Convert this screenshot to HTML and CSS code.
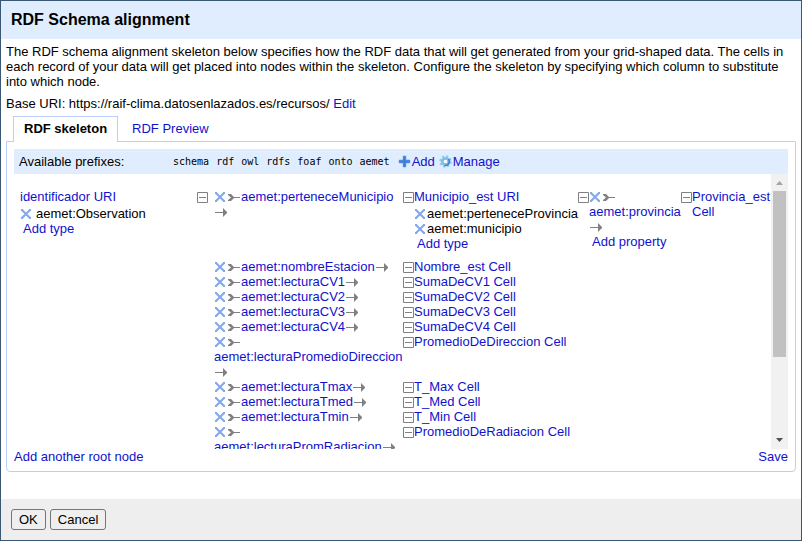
FILE: index.html
```
<!DOCTYPE html>
<html lang="en">
<head>
<meta charset="utf-8">
<title>RDF Schema alignment</title>
<link rel="stylesheet" href="styles.css">
</head>
<body>
<svg class="sprites" aria-hidden="true">
  <symbol id="remove" viewBox="0 0 13 12"><path d="M2 2L10 10M10 2L2 10" fill="none" stroke="#84a9ee" stroke-width="2.200"/><path d="M1 1h2v2H1zM9 1h2v2H9zM1 9h2v2H1zM9 9h2v2H9z" fill="#84a9ee"/></symbol>
  <symbol id="tail" viewBox="0 0 14 12"><path d="M1 3h3l3 3h6v1H7l-3 3H1V9l3-2.500L1 4z" fill="#808080"/></symbol>
  <symbol id="arrow" viewBox="0 0 13 12"><path d="M1 6h8V2l4.500 4.500L9 11V7H1z" fill="#808080"/></symbol>
  <symbol id="toggle" viewBox="0 0 11 11"><path d="M.5.5h10v10H.5zM2 5.500h7" fill="none" stroke="#808080"/></symbol>
</svg>
<div class="dialog">
  <h1 class="title">RDF Schema alignment</h1>
  <main class="body">
    <p class="intro">The RDF schema alignment skeleton below specifies how the RDF data that will get generated from your grid-shaped data. The cells in each record of your data will get placed into nodes within the skeleton. Configure the skeleton by specifying which column to substitute into which node.</p>
    <p class="base">Base URI: https://raif-clima.datosenlazados.es/recursos/ <a href="#">Edit</a></p>
    <nav class="tabs">
      <a class="tab active" href="#">RDF skeleton</a>
      <a class="tab" href="#">RDF Preview</a>
    </nav>
    <section class="panel">
      <div class="prefixes">
        <span class="prefix-label">Available prefixes:</span>
        <span class="prefix-list"><span>schema</span><span>rdf</span><span>owl</span><span>rdfs</span><span>foaf</span><span>onto</span><span>aemet</span></span>
        <a class="action" href="#"><svg width="13" height="13" viewBox="0 0 13 13"><path d="M5.500 1.500h2v4h4v2h-4v4h-2v-4h-4v-2h4z" fill="#2f73d0" stroke="#4d8ade" stroke-width="1.400" stroke-linejoin="round"/></svg>Add</a>
        <a class="action" href="#"><svg width="13" height="13" viewBox="0 0 13 13"><circle cx="6.500" cy="6.500" r="5.200" fill="none" stroke="#8fc4ea" stroke-width="2" stroke-dasharray="2.100 1.984"/><circle cx="6.500" cy="6.500" r="3.200" fill="#fff" stroke="#7dbfe8" stroke-width="2.800"/><path d="M9.500 4A4 4 0 0 1 5.500 10.400" fill="none" stroke="#3585c8" stroke-width="1.500"/></svg>Manage</a>
      </div>
      <div class="viewport">
        <div class="tree">
          <div class="root">
            <a href="#">identificador URI</a>
            <ul class="types spaced">
              <li><svg class="remove"><use href="#remove"/></svg>aemet:Observation</li>
              <li><a class="add" href="#">Add type</a></li>
            </ul>
          </div>
          <svg class="toggle"><use href="#toggle"/></svg>
          <div class="links">
            <div class="link first">
              <div class="property"><svg class="remove"><use href="#remove"/></svg><svg class="tail"><use href="#tail"/></svg><a href="#">aemet:perteneceMunicipio</a><svg class="arrow"><use href="#arrow"/></svg></div>
              <svg class="toggle"><use href="#toggle"/></svg>
              <div class="node">
                <a href="#">Municipio_est URI</a>
                <ul class="types">
                  <li><svg class="remove"><use href="#remove"/></svg>aemet:perteneceProvincia</li>
                  <li><svg class="remove"><use href="#remove"/></svg>aemet:municipio</li>
                  <li><a class="add" href="#">Add type</a></li>
                </ul>
              </div>
              <svg class="toggle"><use href="#toggle"/></svg>
              <div class="property"><svg class="remove"><use href="#remove"/></svg><svg class="tail"><use href="#tail"/></svg><a href="#">aemet:provincia</a> <svg class="arrow"><use href="#arrow"/></svg><br><a class="add" href="#">Add property</a></div>
              <svg class="toggle"><use href="#toggle"/></svg>
              <div class="node"><a href="#">Provincia_est Cell</a></div>
            </div>
            <div class="link"><div class="property"><svg class="remove"><use href="#remove"/></svg><svg class="tail"><use href="#tail"/></svg><a href="#">aemet:nombreEstacion</a><svg class="arrow"><use href="#arrow"/></svg></div><svg class="toggle"><use href="#toggle"/></svg><a href="#">Nombre_est Cell</a></div>
            <div class="link"><div class="property"><svg class="remove"><use href="#remove"/></svg><svg class="tail"><use href="#tail"/></svg><a href="#">aemet:lecturaCV1</a><svg class="arrow"><use href="#arrow"/></svg></div><svg class="toggle"><use href="#toggle"/></svg><a href="#">SumaDeCV1 Cell</a></div>
            <div class="link"><div class="property"><svg class="remove"><use href="#remove"/></svg><svg class="tail"><use href="#tail"/></svg><a href="#">aemet:lecturaCV2</a><svg class="arrow"><use href="#arrow"/></svg></div><svg class="toggle"><use href="#toggle"/></svg><a href="#">SumaDeCV2 Cell</a></div>
            <div class="link"><div class="property"><svg class="remove"><use href="#remove"/></svg><svg class="tail"><use href="#tail"/></svg><a href="#">aemet:lecturaCV3</a><svg class="arrow"><use href="#arrow"/></svg></div><svg class="toggle"><use href="#toggle"/></svg><a href="#">SumaDeCV3 Cell</a></div>
            <div class="link"><div class="property"><svg class="remove"><use href="#remove"/></svg><svg class="tail"><use href="#tail"/></svg><a href="#">aemet:lecturaCV4</a><svg class="arrow"><use href="#arrow"/></svg></div><svg class="toggle"><use href="#toggle"/></svg><a href="#">SumaDeCV4 Cell</a></div>
            <div class="link"><div class="property"><svg class="remove"><use href="#remove"/></svg><svg class="tail"><use href="#tail"/></svg><a href="#">aemet:lecturaPromedioDireccion</a><svg class="arrow"><use href="#arrow"/></svg></div><svg class="toggle"><use href="#toggle"/></svg><a href="#">PromedioDeDireccion Cell</a></div>
            <div class="link"><div class="property"><svg class="remove"><use href="#remove"/></svg><svg class="tail"><use href="#tail"/></svg><a href="#">aemet:lecturaTmax</a><svg class="arrow"><use href="#arrow"/></svg></div><svg class="toggle"><use href="#toggle"/></svg><a href="#">T_Max Cell</a></div>
            <div class="link"><div class="property"><svg class="remove"><use href="#remove"/></svg><svg class="tail"><use href="#tail"/></svg><a href="#">aemet:lecturaTmed</a><svg class="arrow"><use href="#arrow"/></svg></div><svg class="toggle"><use href="#toggle"/></svg><a href="#">T_Med Cell</a></div>
            <div class="link"><div class="property"><svg class="remove"><use href="#remove"/></svg><svg class="tail"><use href="#tail"/></svg><a href="#">aemet:lecturaTmin</a><svg class="arrow"><use href="#arrow"/></svg></div><svg class="toggle"><use href="#toggle"/></svg><a href="#">T_Min Cell</a></div>
            <div class="link"><div class="property"><svg class="remove"><use href="#remove"/></svg><svg class="tail"><use href="#tail"/></svg><a href="#">aemet:lecturaPromRadiacion</a><svg class="arrow"><use href="#arrow"/></svg></div><svg class="toggle"><use href="#toggle"/></svg><a href="#">PromedioDeRadiacion Cell</a></div>
          </div>
        </div>
        <div class="scrollbar">
          <svg width="17" height="17" viewBox="0 0 17 17"><path d="M5 11l3.500-4 3.500 4z" fill="#a3a3a3"/></svg>
          <div class="thumb"></div>
          <svg width="17" height="17" viewBox="0 0 17 17"><path d="M5 6h7l-3.500 4z" fill="#505050"/></svg>
        </div>
      </div>
      <div class="panel-actions"><a href="#">Add another root node</a><a href="#">Save</a></div>
    </section>
  </main>
  <footer class="footer">
    <button type="button">OK</button>
    <button type="button">Cancel</button>
  </footer>
</div>
</body>
</html>
```
FILE: styles.css
```
* { box-sizing: border-box; }
body {
  margin: 0;
  font: 13px/15px "Liberation Sans", Arial, sans-serif;
  color: #000;
  background: #fff;
}
a { color: #11c; text-decoration: none; }
p, h1, ul { margin: 0; padding: 0; }
ul { list-style: none; }
.sprites { position: absolute; width: 0; height: 0; }
.dialog {
  display: flex;
  flex-direction: column;
  min-height: 100vh;
  border: 1px solid #3a5774;
}
.title {
  padding: 9px 10px;
  background: #e0edfe;
  font-size: 16px;
  line-height: 20px;
}
.body { flex: 1; padding: 5px 5px 0; }
.base { margin-top: 7px; }
.tabs { display: flex; margin: 5px 0 0 7px; }
.tab {
  padding: 4px 10px 5px;
  border: 1px solid transparent;
  border-bottom: 0;
  margin-right: 3px;
}
.tab.active {
  position: relative;
  margin-bottom: -1px;
  padding-bottom: 6px;
  background: #fff;
  border-color: #bccffa;
  color: #000;
  font-weight: bold;
}
.panel {
  padding: 7px;
  border: 1px solid #bccffa;
  border-radius: 0 0 4px 4px;
}
.prefixes {
  display: flex;
  align-items: center;
  padding: 5px;
  background: #e0edfe;
}
.prefix-label { width: 154px; }
.prefix-list {
  display: flex;
  gap: 7px;
  margin-right: 8px;
  font: 10px/15px "DejaVu Sans Mono", monospace;
}
.action { display: flex; align-items: center; gap: 1px; margin-right: 4px; }
.viewport { display: flex; height: 275px; overflow: hidden; }
.tree { flex: 1; display: flex; min-width: 0; padding: 15px 0 0 6px; }
.root { width: 177px; flex: none; }
.types { padding-top: 2px; }
.spaced .remove { margin-right: 3px; }
.add { margin-left: 3px; }
.links { flex: 1; min-width: 0; margin-left: 6px; }
.link {
  display: grid;
  grid-template-columns: 188px 12px 164px 11px 92px 11px 1fr;
  white-space: nowrap;
}
.link > a { grid-column: 3 / -1; }
.link.first { padding-bottom: 8px; }
.property, .first .node:last-child { white-space: normal; }
.toggle { flex: none; width: 11px; height: 11px; margin-top: 3px; }
.link .toggle { justify-self: end; }
.remove { width: 13px; height: 12px; vertical-align: -2px; }
.tail { width: 14px; height: 12px; vertical-align: -2px; }
.arrow { width: 13px; height: 12px; vertical-align: -2px; }
.scrollbar {
  display: flex;
  flex-direction: column;
  width: 17px;
  background: #f1f1f1;
}
.thumb { height: 166px; margin: 0 2px auto; background: #c1c1c1; }
.panel-actions { display: flex; justify-content: space-between; }
.footer { display: flex; gap: 4px; padding: 10px; background: #eee; }
button {
  padding: 2px 7px;
  border: 1px solid #767676;
  border-radius: 3px;
  background: #efefef;
  color: #000;
  font: inherit;
}
```
